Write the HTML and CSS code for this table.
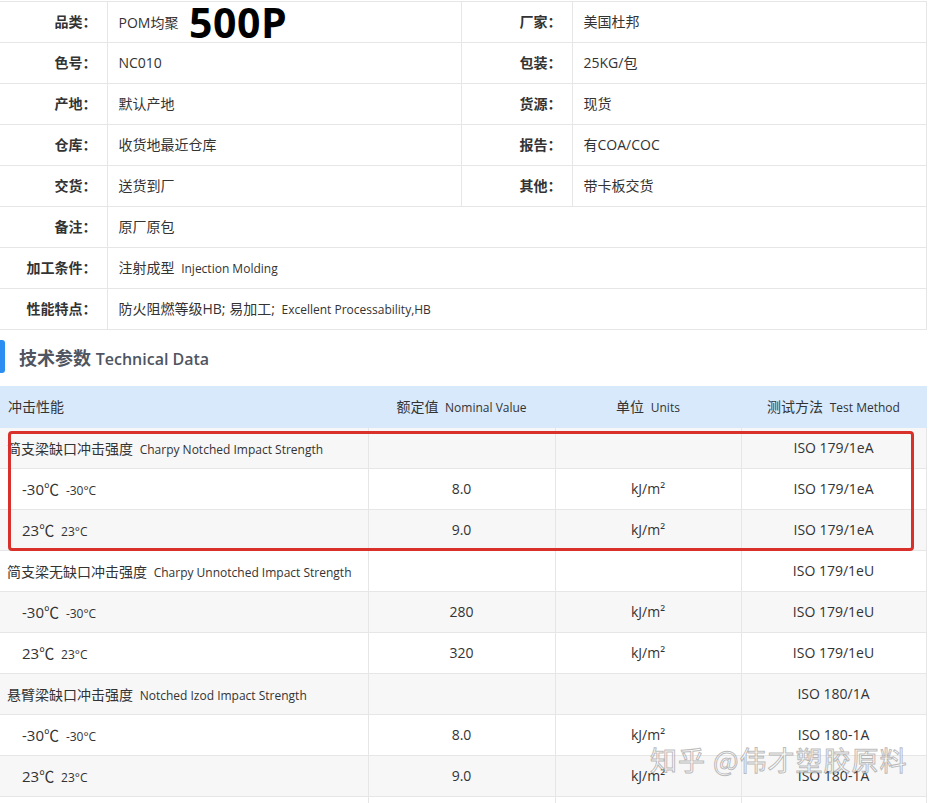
FILE: index.html
```html
<!DOCTYPE html>
<html lang="zh-CN">
<head>
<meta charset="utf-8">
<link rel="stylesheet" href="styles.css">
</head>
<body>
<div class="page">
  <table class="info">
    <colgroup><col class="c1"><col class="c2"><col class="c3"><col class="c4"></colgroup>
    <tr><th>品类：</th><td>POM均聚 <span class="big">500P</span></td><th>厂家：</th><td>美国杜邦</td></tr>
    <tr><th>色号：</th><td>NC010</td><th>包装：</th><td>25KG/包</td></tr>
    <tr><th>产地：</th><td>默认产地</td><th>货源：</th><td>现货</td></tr>
    <tr><th>仓库：</th><td>收货地最近仓库</td><th>报告：</th><td>有COA/COC</td></tr>
    <tr><th>交货：</th><td>送货到厂</td><th>其他：</th><td>带卡板交货</td></tr>
    <tr><th>备注：</th><td colspan="3">原厂原包</td></tr>
    <tr><th>加工条件：</th><td colspan="3">注射成型 <span class="en">Injection Molding</span></td></tr>
    <tr><th>性能特点：</th><td colspan="3">防火阻燃等级HB; 易加工; <span class="en">Excellent Processability,HB</span></td></tr>
  </table>

  <div class="title"><span class="bar"></span><h2>技术参数 <span class="title-en">Technical Data</span></h2></div>

  <div class="tech-wrap">
    <table class="tech">
      <colgroup><col class="t1"><col class="t2"><col class="t3"><col class="t4"></colgroup>
      <thead>
        <tr><th class="left">冲击性能</th><th>额定值 <span class="en">Nominal Value</span></th><th>单位 <span class="en">Units</span></th><th>测试方法 <span class="en">Test Method</span></th></tr>
      </thead>
      <tbody>
        <tr><td class="group">简支梁缺口冲击强度 <span class="en">Charpy Notched Impact Strength</span></td><td></td><td></td><td>ISO 179/1eA</td></tr>
        <tr><td class="sub">-30℃ <span class="en">-30°C</span></td><td>8.0</td><td>kJ/m²</td><td>ISO 179/1eA</td></tr>
        <tr><td class="sub">23℃ <span class="en">23°C</span></td><td>9.0</td><td>kJ/m²</td><td>ISO 179/1eA</td></tr>
        <tr><td class="group">简支梁无缺口冲击强度 <span class="en">Charpy Unnotched Impact Strength</span></td><td></td><td></td><td>ISO 179/1eU</td></tr>
        <tr><td class="sub">-30℃ <span class="en">-30°C</span></td><td>280</td><td>kJ/m²</td><td>ISO 179/1eU</td></tr>
        <tr><td class="sub">23℃ <span class="en">23°C</span></td><td>320</td><td>kJ/m²</td><td>ISO 179/1eU</td></tr>
        <tr><td class="group">悬臂梁缺口冲击强度 <span class="en">Notched Izod Impact Strength</span></td><td></td><td></td><td>ISO 180/1A</td></tr>
        <tr><td class="sub">-30℃ <span class="en">-30°C</span></td><td>8.0</td><td>kJ/m²</td><td>ISO 180-1A</td></tr>
        <tr><td class="sub">23℃ <span class="en">23°C</span></td><td>9.0</td><td>kJ/m²</td><td>ISO 180-1A</td></tr>
        <tr><td class="group">&nbsp;</td><td></td><td></td><td></td></tr>
      </tbody>
    </table>
    <div class="highlight"></div>
    <div class="watermark">知乎 @伟才塑胶原料</div>
  </div>
</div>
</body>
</html>
```

FILE: styles.css
```css
html, body {
  margin: 0;
  padding: 0;
  background: #fff;
}
body {
  font-family: "Open Sans", "Noto Sans CJK SC", sans-serif;
  color: #333;
  font-size: 14px;
  overflow: hidden;
}
.page {
  width: 926px;
  padding-top: 1px;
}
table {
  border-collapse: collapse;
  table-layout: fixed;
  width: 926px;
}
.info .c1 { width: 107px; }
.info .c2 { width: 354px; }
.info .c3 { width: 111px; }
.info .c4 { width: 354px; }
.info th, .info td {
  height: 41px;
  padding: 0;
  border: 1px solid #e6e6e6;
  box-sizing: border-box;
  line-height: 20px;
  vertical-align: middle;
  white-space: nowrap;
}
.info th {
  text-align: right;
  font-weight: bold;
  padding-right: 10px;
}
.info td {
  text-align: left;
  padding-left: 11px;
}
.info th:first-child { border-left: none; }
.en {
  font-size: 12px;
  margin-left: 3px;
}
.big {
  display: inline-block;
  font-size: 41px;
  font-weight: bold;
  line-height: 40px;
  height: 40px;
  color: #000;
  margin-left: 7px;
  vertical-align: -10px;
  letter-spacing: 0.5px;
}
.title {
  display: flex;
  align-items: center;
  height: 56px;
  box-sizing: border-box;
  padding-bottom: 3px;
}
.bar {
  width: 5px;
  height: 33px;
  background: #2b8ef0;
  border-radius: 0 3px 3px 0;
}
.title h2 {
  margin: 0 0 0 14px;
  font-size: 18px;
  font-weight: bold;
  color: #4f5561;
}
.title-en {
  font-size: 16px;
  font-weight: 600;
}
.tech-wrap {
  position: relative;
}
.tech .t1 { width: 368px; }
.tech .t2 { width: 187px; }
.tech .t3 { width: 186px; }
.tech .t4 { width: 185px; }
.tech th, .tech td {
  height: 41px;
  padding: 0;
  border: 1px solid #e6e6e6;
  box-sizing: border-box;
  text-align: center;
  vertical-align: middle;
  white-space: nowrap;
  font-weight: normal;
}
.tech th:first-child, .tech td:first-child { border-left: none; }
.tech thead th {
  background: #d7e9fb;
  border-top: none;
  border-color: #d7e9fb;
}
.tech th.left { text-align: left; padding-left: 8px; }
.tech tbody tr:nth-child(odd) { background: #f7f7f8; }
.tech td.group { text-align: left; padding-left: 7px; }
.tech td.sub { text-align: left; padding-left: 22px; font-size: 15px; }
.tech td.sub .en { font-size: 12px; }
.highlight {
  position: absolute;
  left: 8px;
  top: 45px;
  width: 906px;
  height: 120px;
  box-sizing: border-box;
  border: 3px solid #d9302c;
  border-radius: 4px;
  pointer-events: none;
}
.watermark {
  position: absolute;
  left: 650px;
  top: 354px;
  font-size: 27px;
  letter-spacing: 1px;
  color: rgba(255, 255, 255, 0.7);
  -webkit-text-stroke: 1px rgba(120, 120, 120, 0.5);
  font-family: "Noto Sans CJK SC", sans-serif;
  white-space: nowrap;
}
```
